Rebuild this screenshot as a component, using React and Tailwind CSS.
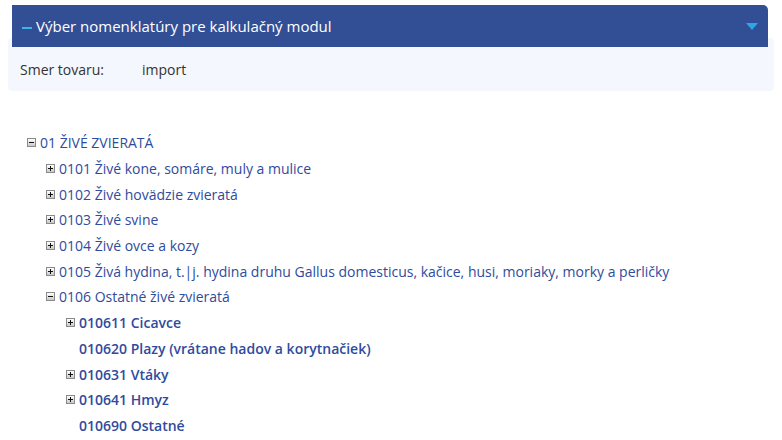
import React from 'react'

const font = { fontFamily: '"Open Sans", "Noto Sans", sans-serif' }

function Toggle({ open }) {
  return (
    <span className="inline-flex w-[9px] h-[9px] items-center justify-center border border-[#8a8a8a] bg-gradient-to-b from-white to-[#c9c9c9] shrink-0">
      <svg width="7" height="7" viewBox="0 0 7 7">
        <rect x="1" y="3" width="5" height="1" fill="#111" />
        {!open && <rect x="3" y="1" width="1" height="5" fill="#111" />}
      </svg>
    </span>
  )
}

function Node({ level, toggle, bold, children }) {
  const pad = ['pl-[27px]', 'pl-[46px]', 'pl-[66px]'][level]
  return (
    <div className={`flex items-center h-[25.7px] ${pad}`}>
      {toggle ? <Toggle open={toggle === 'open'} /> : <span className="w-[9px] shrink-0" />}
      <span className={`ml-[4px] text-[14px] text-[#2f4b9d] whitespace-nowrap ${bold ? 'font-semibold' : ''}`}>
        {children}
      </span>
    </div>
  )
}

export default function App() {
  return (
    <div className="w-[782px] h-[440px] bg-white overflow-hidden" style={font}>
      <div className="pt-[5px] px-[8px]">
        <div className="relative z-10 mx-[4px] mr-[6px] -mb-[9px] h-[42px] bg-[#324f96] rounded-tr-[5px] flex items-center pl-[10px] pr-[10px]">
          <span className="w-[10px] h-[2px] bg-[#3cb4e6] mr-[4px] mt-[3px]" />
          <span className="text-white text-[15px]">Výber nomenklatúry pre kalkulačný modul</span>
          <svg className="ml-auto" width="12" height="7" viewBox="0 0 12 7">
            <path d="M0 0 L12 0 L6 7 Z" fill="#2ba7e2" />
          </svg>
        </div>
        <div className="bg-[#f4f7fd] rounded-[4px] h-[53px] pt-[9px] flex items-center text-[14px] text-[#333]">
          <span className="pl-[12px] w-[134px]">Smer tovaru:</span>
          <span>import</span>
        </div>
      </div>
      <div className="pt-[39px]">
        <Node level={0} toggle="open">01 ŽIVÉ ZVIERATÁ</Node>
        <Node level={1} toggle="closed">0101 Živé kone, somáre, muly a mulice</Node>
        <Node level={1} toggle="closed">0102 Živé hovädzie zvieratá</Node>
        <Node level={1} toggle="closed">0103 Živé svine</Node>
        <Node level={1} toggle="closed">0104 Živé ovce a kozy</Node>
        <Node level={1} toggle="closed">0105 Živá hydina, t.|j. hydina druhu Gallus domesticus, kačice, husi, moriaky, morky a perličky</Node>
        <Node level={1} toggle="open">0106 Ostatné živé zvieratá</Node>
        <Node level={2} toggle="closed" bold>010611 Cicavce</Node>
        <Node level={2} bold>010620 Plazy (vrátane hadov a korytnačiek)</Node>
        <Node level={2} toggle="closed" bold>010631 Vtáky</Node>
        <Node level={2} toggle="closed" bold>010641 Hmyz</Node>
        <Node level={2} bold>010690 Ostatné</Node>
      </div>
    </div>
  )
}
